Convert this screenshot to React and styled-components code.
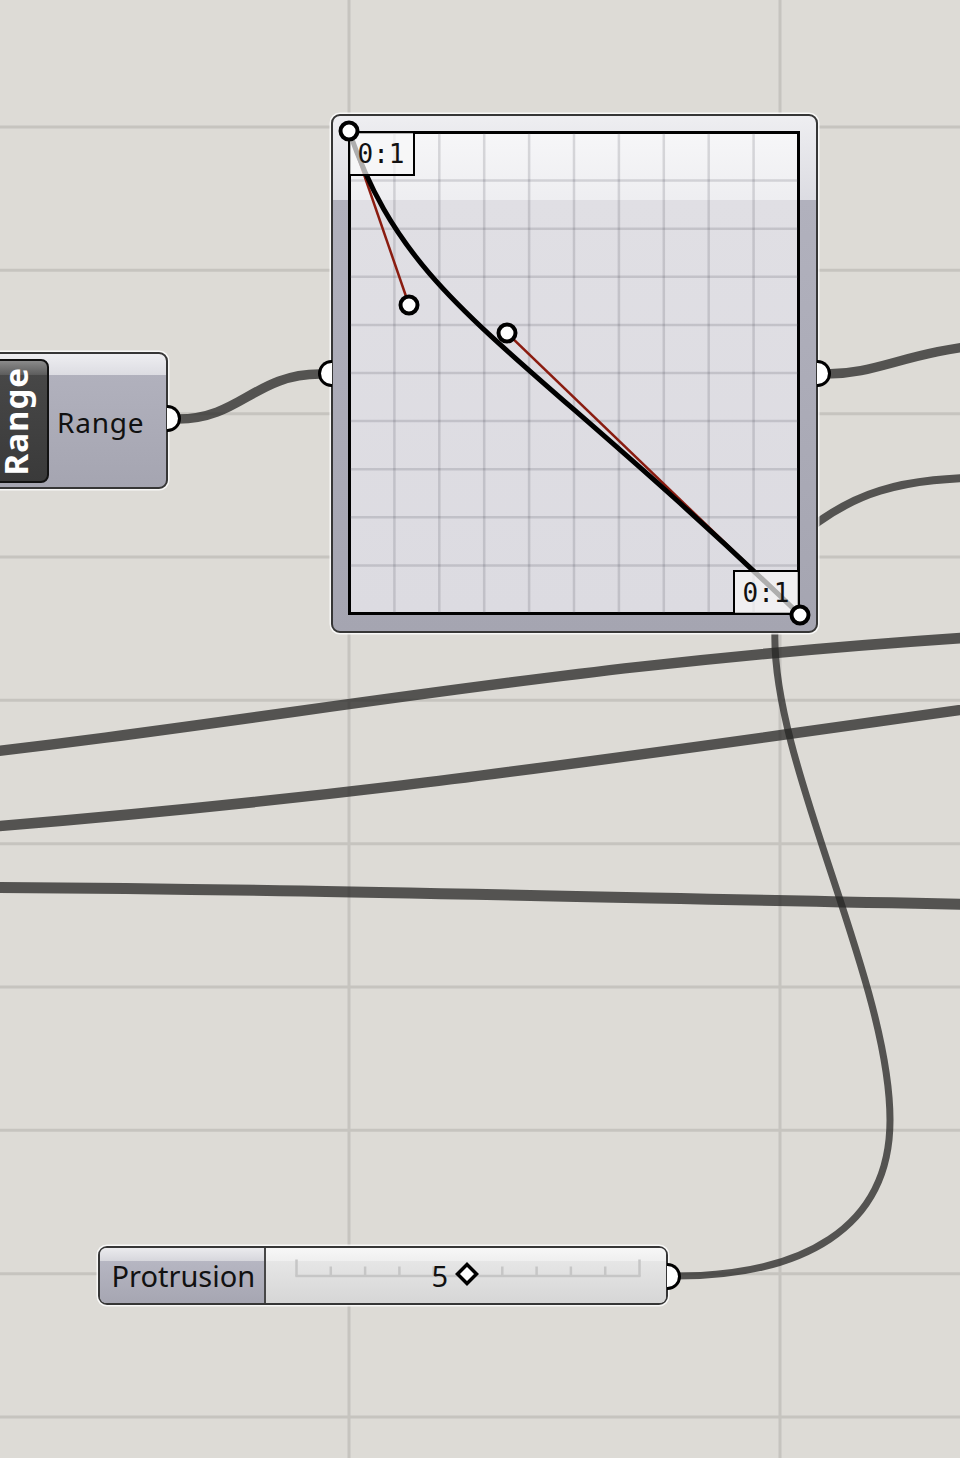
import styled, { createGlobalStyle } from 'styled-components';

const GlobalStyle = createGlobalStyle`
  html, body {
    margin: 0;
    padding: 0;
    background: #dddbd6;
  }
  body {
    font-family: "Noto Sans", "Liberation Sans", sans-serif;
  }
`;

const Canvas = styled.div`
  position: relative;
  width: 960px;
  height: 1458px;
  overflow: hidden;
  background: #dddbd6;
`;

const WireLayer = styled.svg`
  position: absolute;
  left: 0;
  top: 0;
`;

const Node = styled.div`
  position: absolute;
  left: ${p => p.$x}px;
  top: ${p => p.$y}px;
  width: ${p => p.$w}px;
  height: ${p => p.$h}px;
  box-sizing: border-box;
  border: 2.5px solid #363636;
  border-radius: 9px;
  box-shadow: 0 0 0 1.5px rgba(255, 255, 255, 0.8);
  background: linear-gradient(
    to bottom,
    #eeeef1 0,
    #dcdce2 ${p => p.$gloss}px,
    #b1b1bd ${p => p.$gloss}px,
    #a5a5b1 100%
  );
`;

const Port = styled.div`
  position: absolute;
  top: ${p => p.$top}px;
  ${p => (p.$side === 'left' ? 'left: -15.5px;' : 'right: -15px;')}
  width: 14px;
  height: 27px;
  box-sizing: border-box;
  background: #fff;
  border: 3.5px solid #000;
  ${p => (p.$side === 'left'
    ? 'border-right: none; border-radius: 14px 0 0 14px;'
    : 'border-left: none; border-radius: 0 14px 14px 0;')}
`;

/* Range param */
const RangeBody = styled(Node)`
  display: flex;
  align-items: center;
  padding: 4.5px 0 3.5px 0;
`;

const NickTab = styled.div`
  width: 67px;
  height: 124px;
  flex: none;
  box-sizing: border-box;
  border: 2px solid #121212;
  border-radius: 8px;
  background: linear-gradient(
    to bottom,
    #8a8a8a 0,
    #5c5c5c 14px,
    #474747 14px,
    #3a3a3a 100%
  );
  display: flex;
  align-items: center;
  justify-content: flex-end;
  padding-right: 15px;
  color: #fff;
  font-weight: 700;
  font-size: 33px;
  letter-spacing: 1px;
`;

const NickText = styled.span`
  writing-mode: vertical-rl;
  transform: rotate(180deg);
  line-height: 1;
`;

const ParamName = styled.div`
  margin-left: 8px;
  font-size: 28px;
  letter-spacing: 0.8px;
  color: #111;
  padding-top: 2px;
`;

/* Graph mapper */
const GraphBody = styled(Node)`
  padding: 14.5px;
`;

const Plot = styled.div`
  position: relative;
  width: 452px;
  height: 484px;
  box-sizing: border-box;
  border: 3px solid #000;
  background: linear-gradient(
    to bottom,
    #f6f6f8 0,
    #eeeef1 66px,
    #e0dfe4 66px,
    #dcdbe1 100%
  );
`;

const PlotDrawing = styled.svg`
  position: absolute;
  left: -3px;
  top: -3px;
  overflow: visible;
`;

const CornerLabel = styled.div`
  position: absolute;
  ${p => (p.$corner === 'tl' ? 'left: -3px; top: -3px;' : 'right: -3px; bottom: -3px;')}
  width: 67px;
  height: 45px;
  box-sizing: border-box;
  border: 2.5px solid #000;
  background: rgba(248, 248, 248, 0.7);
  display: flex;
  align-items: center;
  justify-content: center;
  font-family: "DejaVu Sans Mono", "Liberation Mono", monospace;
  font-size: 26px;
  color: #111;
  padding-top: 1px;
`;

/* Number slider */
const SliderBody = styled(Node)`
  display: flex;
  align-items: stretch;
  background: #d8d8d8;
`;

const SliderName = styled.div`
  width: 166px;
  box-sizing: border-box;
  border-right: 2.5px solid #474747;
  border-radius: 6px 0 0 6px;
  box-shadow: 1px 0 0 #f4f4f4;
  background: linear-gradient(
    to bottom,
    #ebebee 0,
    #d6d6dc 13px,
    #b6b6c2 13px,
    #a6a6b2 100%
  );
  display: flex;
  align-items: center;
  padding-left: 11.5px;
  font-size: 29px;
  color: #111;
`;

const SliderRail = styled.div`
  position: relative;
  flex: 1;
  display: flex;
  align-items: center;
  padding-left: 165.5px;
  border-radius: 0 6px 6px 0;
  background: linear-gradient(
    to bottom,
    #f7f7f7 0,
    #efefef 13px,
    #e6e6e6 13px,
    #d6d6d6 100%
  );
`;

const RailTicks = styled.svg`
  position: absolute;
  left: 0;
  top: 0;
`;

const SliderValue = styled.div`
  position: relative;
  display: flex;
  align-items: center;
  font-size: 29px;
  color: #111;
  margin-top: -1px;
  svg {
    margin-left: 6px;
    margin-top: -2px;
  }
`;

const gridRows = Array.from({ length: 10 }, (_, k) => 127 + k * 143.33);
const gridCols = [349, 780];

const wires = [
  { d: 'M 178 419 C 240 419, 255 374, 320 374', w: 9.5 },
  { d: 'M 826 374 C 880 374, 905 351, 1000 343', w: 9.5 },
  { d: 'M 790 545 C 850 490, 900 478, 1000 477', w: 8 },
  { d: 'M -100 762 C 300 720, 550 660, 1060 632', w: 10.5 },
  { d: 'M -100 834 C 350 800, 600 760, 1060 696', w: 10.5 },
  { d: 'M -100 887 C 300 888, 600 898, 1060 906', w: 11 },
  { d: 'M 775 630 C 770 760, 890 980, 890 1120 C 890 1230, 800 1276, 676 1276', w: 7 },
];

const plotCols = Array.from({ length: 9 }, (_, k) => 349.5 + (k + 1) * 44.9);
const plotRows = Array.from({ length: 9 }, (_, k) => 132.5 + (k + 1) * 48.1);

const railTicks = Array.from({ length: 11 }, (_, k) => 297 + k * 34.3);

const points = [
  [349, 131],
  [409, 305],
  [507, 333],
  [800, 615],
];

export default function App() {
  return (
    <Canvas>
      <GlobalStyle />
      <WireLayer width="960" height="1458" viewBox="0 0 960 1458">
        {gridRows.map(y => (
          <line key={y} x1="0" x2="960" y1={y} y2={y} stroke="#c6c4bf" strokeWidth="3" />
        ))}
        {gridCols.map(x => (
          <line key={x} x1={x} x2={x} y1="0" y2="1458" stroke="#c6c4bf" strokeWidth="3" />
        ))}
        {wires.map((wire, i) => (
          <path
            key={i}
            d={wire.d}
            fill="none"
            stroke="rgba(38, 38, 36, 0.75)"
            strokeWidth={wire.w}
          />
        ))}
      </WireLayer>

      <RangeBody $x={-20} $y={352} $w={188} $h={137} $gloss={21}>
        <NickTab>
          <NickText>Range</NickText>
        </NickTab>
        <ParamName>Range</ParamName>
        <Port $side="right" $top={51} />
      </RangeBody>

      <GraphBody $x={331} $y={114} $w={487} $h={519} $gloss={84}>
        <Plot>
          <PlotDrawing width="452" height="484" viewBox="348 131 452 484">
            {plotCols.map(x => (
              <line key={x} x1={x} x2={x} y1="133" y2="613" stroke="rgba(60,60,72,0.17)" strokeWidth="2.5" />
            ))}
            {plotRows.map(y => (
              <line key={y} x1="350" x2="798" y1={y} y2={y} stroke="rgba(60,60,72,0.17)" strokeWidth="2.5" />
            ))}
            <line x1="349" y1="131" x2="409" y2="305" stroke="#8a1c10" strokeWidth="2.5" />
            <line x1="507" y1="333" x2="800" y2="615" stroke="#8a1c10" strokeWidth="2.5" />
            <path
              d="M 349 131 C 409 305, 507 333, 800 615"
              fill="none"
              stroke="#000"
              strokeWidth="5"
            />
          </PlotDrawing>
          <CornerLabel $corner="tl">0:1</CornerLabel>
          <CornerLabel $corner="br">0:1</CornerLabel>
          <PlotDrawing width="452" height="484" viewBox="348 131 452 484">
            {points.map(([x, y]) => (
              <circle key={x} cx={x} cy={y} r="8.5" fill="#fff" stroke="#000" strokeWidth="4" />
            ))}
          </PlotDrawing>
        </Plot>
        <Port $side="left" $top={244} />
        <Port $side="right" $top={244} />
      </GraphBody>

      <SliderBody $x={98} $y={1246} $w={570} $h={59} $gloss={14}>
        <SliderName>Protrusion</SliderName>
        <SliderRail>
          <RailTicks width="399" height="54" viewBox="266.5 1248.5 399 54">
            <line x1="296" x2="641" y1="1276.5" y2="1276.5" stroke="#c6c6c6" strokeWidth="2.5" />
            {railTicks.map((x, k) => (
              <line
                key={k}
                x1={x}
                x2={x}
                y1={k === 0 || k === 10 ? 1260 : 1267}
                y2="1277"
                stroke="#c6c6c6"
                strokeWidth="2.5"
              />
            ))}
          </RailTicks>
          <SliderValue>
            5
            <svg width="26" height="26" viewBox="0 0 26 26">
              <polygon points="13,3.5 22.5,13 13,22.5 3.5,13" fill="#fff" stroke="#000" strokeWidth="3.5" />
            </svg>
          </SliderValue>
        </SliderRail>
        <Port $side="right" $top={14.5} />
      </SliderBody>
    </Canvas>
  );
}
